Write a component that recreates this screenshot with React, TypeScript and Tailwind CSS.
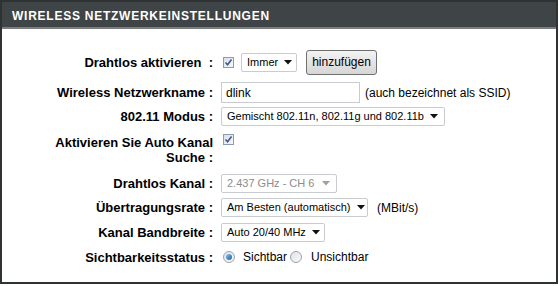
import React from 'react';

const font = { fontFamily: '"Liberation Sans", Arial, sans-serif' };

function Arrow({ disabled }: { disabled?: boolean }) {
  return (
    <svg width="8" height="5" viewBox="0 0 8 5" className="shrink-0">
      <path d="M0 0H8L4 4.5Z" fill={disabled ? '#a0a0a0' : '#111'} />
    </svg>
  );
}

function Select({ value, width, disabled }: { value: string; width: string; disabled?: boolean }) {
  return (
    <div
      className={`${width} h-[19px] flex items-center justify-between gap-[6px] pl-[5px] pr-[6px] border border-[#c8cbd0] bg-white rounded-[2px] text-[11px] ${
        disabled ? 'text-[#8c8c8c]' : 'text-black'
      }`}
    >
      <span className="whitespace-nowrap">{value}</span>
      <Arrow disabled={disabled} />
    </div>
  );
}

function Checkbox() {
  return (
    <div className="w-[11px] h-[11px] border border-[#8a9bb3] bg-gradient-to-br from-[#dcdfe6] to-[#f8f8fa] flex items-center justify-center">
      <svg width="9" height="9" viewBox="0 0 9 9">
        <path d="M1.5 4.5L3.6 6.8L7.5 1.5" stroke="#3c5a99" strokeWidth="1.6" fill="none" />
      </svg>
    </div>
  );
}

function Radio({ on }: { on?: boolean }) {
  return (
    <div className="w-[12px] h-[12px] rounded-full border border-[#9aa3ad] bg-gradient-to-br from-[#dfe2e6] to-[#fafafa] flex items-center justify-center">
      {on && <div className="w-[6px] h-[6px] rounded-full bg-gradient-to-br from-[#7fc3ee] to-[#1d5f9e]" />}
    </div>
  );
}

function Row({ label, children, className }: { label: React.ReactNode; children?: React.ReactNode; className?: string }) {
  return (
    <div className={`flex ${className ?? 'items-center'}`}>
      <div className="w-[211px] text-right font-bold text-[13px] text-black leading-[15px] whitespace-nowrap">{label}</div>
      <div className="ml-[8px] flex items-center">{children}</div>
    </div>
  );
}

export default function App() {
  return (
    <div className="w-[560px] h-[286px] bg-white" style={font}>
      <div className="w-[558px] h-[284px] border-2 border-[#2f3233] flex flex-col">
        <div className="h-[27px] bg-[#3f4546] border-b-2 border-[#7a7e7f] flex items-center pl-[10px] pt-[2px] shrink-0">
          <span className="text-white font-bold text-[12px] tracking-[0.75px]">WIRELESS NETZWERKEINSTELLUNGEN</span>
        </div>

        <div className="flex flex-col">
          <Row label={<>Drahtlos aktivieren&nbsp;&nbsp;:</>} className="items-center mt-[20px] h-[26px]">
            <div className="ml-[2px]">
              <Checkbox />
            </div>
            <div className="ml-[7px]">
              <Select value="Immer" width="w-[56px]" />
            </div>
            <div className="ml-[9px] h-[25px] w-[71px] rounded-[3px] border border-[#707070] bg-gradient-to-b from-[#f3f3f3] to-[#d6d6d6] flex items-center justify-center text-[12px] text-black">
              hinzufügen
            </div>
          </Row>

          <Row label="Wireless Netzwerkname :" className="items-center mt-[7px] h-[21px]">
            <div className="w-[139px] h-[21px] border border-[#c8cbd0] bg-white flex items-center pl-[4px] text-[12px] text-black">
              dlink
            </div>
            <span className="ml-[5px] text-[12px] text-black whitespace-nowrap">(auch bezeichnet als SSID)</span>
          </Row>

          <Row label="802.11 Modus :" className="items-center mt-[4px] h-[19px]">
            <Select value="Gemischt 802.11n, 802.11g und 802.11b" width="w-[224px]" />
          </Row>

          <Row
            label={
              <>
                Aktivieren Sie Auto Kanal
                <br />
                Suche :
              </>
            }
            className="items-start mt-[8px] h-[40px] pt-[1px]"
          >
            <div className="ml-[2px] mt-[-1px]">
              <Checkbox />
            </div>
          </Row>

          <Row label="Drahtlos Kanal :" className="items-center h-[19px]">
            <Select value="2.437 GHz - CH 6" width="w-[116px]" disabled />
          </Row>

          <Row label="Übertragungsrate :" className="items-center mt-[5px] h-[19px]">
            <Select value="Am Besten (automatisch)" width="w-[147px]" />
            <span className="ml-[9px] text-[12px] text-black">(MBit/s)</span>
          </Row>

          <Row label="Kanal Bandbreite :" className="items-center mt-[5px] h-[20px]">
            <Select value="Auto 20/40 MHz" width="w-[104px]" />
          </Row>

          <Row label="Sichtbarkeitsstatus :" className="items-center mt-[5px] h-[20px]">
            <div className="ml-[2px]">
              <Radio on />
            </div>
            <span className="ml-[8px] text-[12px] text-black">Sichtbar</span>
            <div className="ml-[3px]">
              <Radio />
            </div>
            <span className="ml-[9px] text-[12px] text-black">Unsichtbar</span>
          </Row>
        </div>
      </div>
    </div>
  );
}
